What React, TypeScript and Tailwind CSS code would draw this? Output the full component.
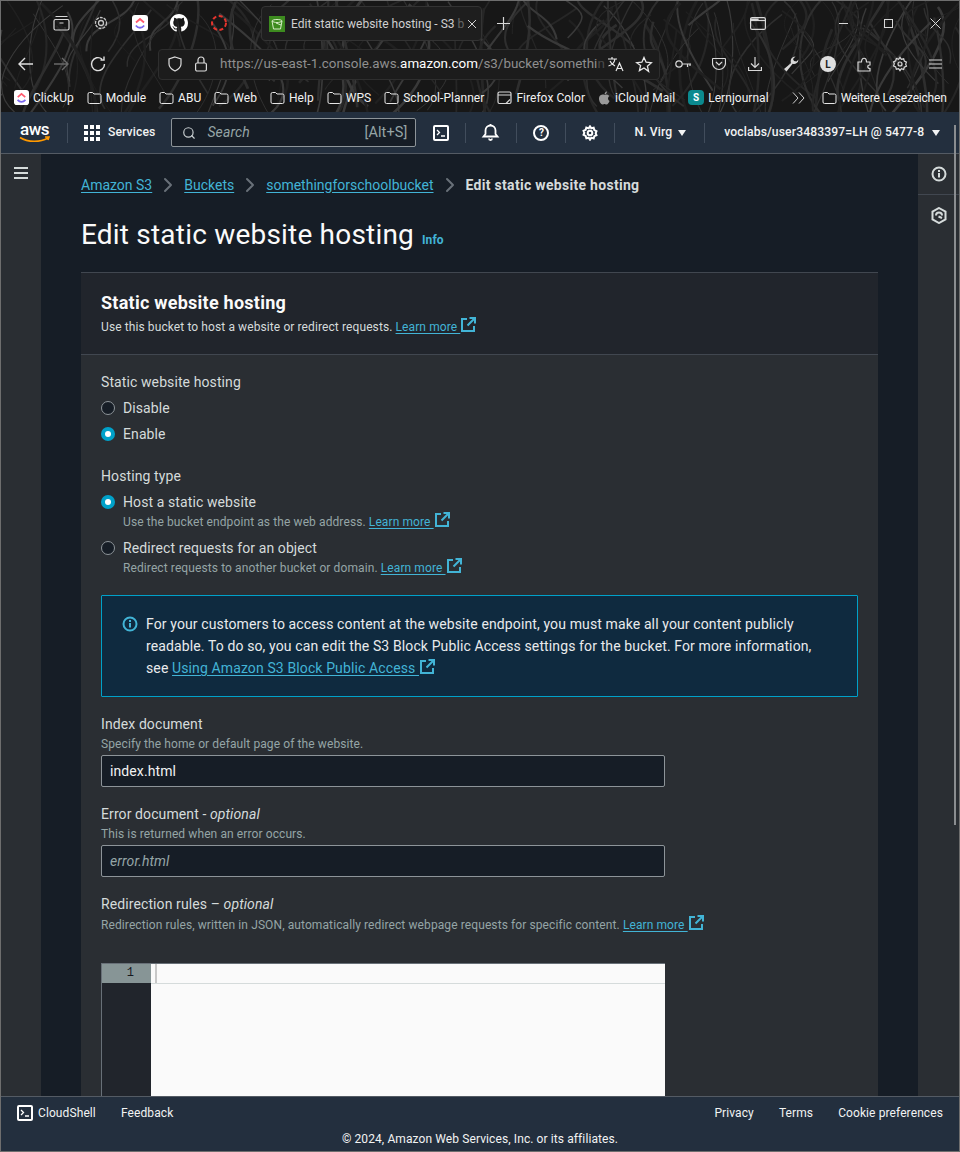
import { ChevronRight, Search } from "lucide-react";

const link = "text-[#42b4d6]";

function ExternalIcon() {
  return (
    <svg width="15" height="15" viewBox="0 0 15 15" fill="none" stroke="#42b4d6" strokeWidth="2" className="inline-block ml-[1px] align-[-1px]">
      <path d="M6 2H1v12h12V9" />
      <path d="M8.500 1H14v5.500M14 1L6.500 8.500" />
    </svg>
  );
}

function LearnMore() {
  return (
    <>
      <a className={`${link} underline underline-offset-2`}>Learn more&nbsp;</a>
      <ExternalIcon />
    </>
  );
}

function Radio({ on }: { on?: boolean }) {
  return on ? (
    <span className="w-[14px] h-[14px] rounded-full bg-[#00a1c9] flex items-center justify-center shrink-0">
      <span className="w-[6px] h-[6px] rounded-full bg-white" />
    </span>
  ) : (
    <span className="w-[14px] h-[14px] rounded-full bg-[#161d26] border border-[#8d9499] shrink-0" />
  );
}

function RadioRow({ on, label, hint }: { on?: boolean; label: string; hint?: React.ReactNode }) {
  return (
    <div className="flex gap-[8px]">
      <span className="h-[20px] flex items-center">
        <Radio on={on} />
      </span>
      <div>
        <div className="text-[14px] leading-[20px] text-[#d5dbdb]">{label}</div>
        {hint && <div className="text-[12px] leading-[16px] text-[#95a5a6]">{hint}</div>}
      </div>
    </div>
  );
}

function Divider() {
  return <span className="block w-px h-[20px] bg-[#414d5c]" />;
}

function Folder() {
  return (
    <svg width="15" height="14" viewBox="0 0 15 14" fill="none" stroke="#e6e6e6" strokeWidth="1" className="shrink-0">
      <path d="M1 3a1.500 1.500 0 0 1 1.500-1.500h3L7 3h5.500A1.500 1.500 0 0 1 14 4.500V11a1.500 1.500 0 0 1-1.500 1.500h-10A1.500 1.500 0 0 1 1 11z" />
    </svg>
  );
}

function ClickUpLogo({ size }: { size: number }) {
  return (
    <svg width={size} height={size} viewBox="0 0 16 16" className="shrink-0">
      <rect width="16" height="16" rx="3" fill="#fff" />
      <path d="M4 7.500L8 4l4 3.500" fill="none" stroke="#ff5a6e" strokeWidth="1.800" />
      <path d="M3.800 10.500c2.500 3 5.900 3 8.400 0" fill="none" stroke="#7b68ee" strokeWidth="1.800" />
    </svg>
  );
}

function Bookmark({ icon, label }: { icon: React.ReactNode; label: string }) {
  return (
    <div className="flex items-center gap-[4px] text-[12px] text-[#f2f2f2] whitespace-nowrap">
      {icon}
      <span>{label}</span>
    </div>
  );
}

// fibre texture behind the browser chrome
function Backdrop() {
  const strands: { d: string; c: string; w: number }[] = [];
  let seed = 7;
  const rnd = () => {
    seed = (seed * 16807) % 2147483647;
    return seed / 2147483647;
  };
  for (let i = 0; i < 190; i++) {
    const x = rnd() * 1000 - 20;
    const lean = (rnd() - 0.5) * 110;
    const bow = (rnd() - 0.5) * 90;
    const y0 = rnd() * 60 - 30;
    const y1 = y0 + 50 + rnd() * 90;
    strands.push({
      d: `M${x} ${y0}C${x + bow} ${y0 + 30} ${x + lean + bow} ${y1 - 30} ${x + lean} ${y1}`,
      c: ["#2e2e2e", "#262626", "#393939", "#202020"][i % 4],
      w: 0.7 + rnd() * 2.2,
    });
  }
  return (
    <svg className="absolute inset-0 w-full h-full" viewBox="0 0 960 112" preserveAspectRatio="none" fill="none">
      {strands.map((s, i) => (
        <path key={i} d={s.d} stroke={s.c} strokeWidth={s.w} />
      ))}
    </svg>
  );
}

function BrowserChrome() {
  return (
    <div className="relative h-[111px] bg-[#171717] overflow-hidden shrink-0 text-[#e6e6e6] tracking-normal">
      <Backdrop />
      {/* Tab strip */}
      <div className="relative h-[44px] flex items-center">
        <div className="w-[260px] flex items-center pl-[52px] gap-[22px]">
          <svg width="17" height="16" viewBox="0 0 17 16" fill="none" stroke="#d8d8d8" strokeWidth="1.200">
            <rect x="1" y="4.500" width="15" height="10.500" rx="1.500" />
            <path d="M2.500 1.500h12M6.500 8h4" />
          </svg>
          <svg width="18" height="18" viewBox="0 0 18 18" fill="none" stroke="#c8c8c8" strokeWidth="1.300">
            <circle cx="9" cy="9" r="5.500" strokeDasharray="3 1" />
            <circle cx="9" cy="9" r="2.500" />
          </svg>
          <ClickUpLogo size={16} />
          <svg width="18" height="18" viewBox="0 0 16 16" fill="#fff">
            <path d="M8 0C3.580 0 0 3.580 0 8c0 3.540 2.290 6.530 5.470 7.590.4.070.55-.17.55-.38 0-.19-.01-.82-.01-1.490-2.010.37-2.530-.49-2.690-.94-.09-.23-.48-.94-.82-1.130-.28-.15-.68-.52-.01-.53.63-.01 1.080.58 1.230.82.720 1.210 1.870.87 2.330.66.070-.52.280-.87.510-1.070-1.780-.2-3.640-.89-3.640-3.950 0-.87.310-1.590.820-2.150-.08-.2-.36-1.020.08-2.120 0 0 .67-.21 2.200.82.640-.18 1.320-.27 2-.27s1.360.09 2 .27c1.530-1.040 2.200-.82 2.200-.82.44 1.100.16 1.920.08 2.120.51.560.82 1.270.82 2.150 0 3.070-1.870 3.750-3.650 3.950.29.250.54.730.54 1.480 0 1.070-.01 1.930-.01 2.200 0 .21.150.46.550.38A8.010 8.010 0 0 0 16 8c0-4.420-3.580-8-8-8z" />
          </svg>
          <svg width="18" height="18" viewBox="0 0 18 18" fill="none" stroke="#e5342d" strokeWidth="2">
            <circle cx="9" cy="9" r="7" strokeDasharray="4 2.500" />
          </svg>
        </div>
        <div className="w-[221px] h-[35px] bg-[#1e1e1e] border border-[#333] rounded-[4px] flex items-center pl-[7px] pr-[9px] gap-[6px] mt-[1px]">
          <svg width="16" height="16" viewBox="0 0 16 16" className="shrink-0">
            <rect width="16" height="16" fill="#3d8b1f" />
            <path d="M3 5c0-2 10-2 10 0l-1.500 8h-7zM3 5c2 2 8 2 10 0M7 7l5 2" fill="none" stroke="#d8ecc8" strokeWidth="1" />
          </svg>
          <span className="text-[12px] text-[#d0d0d0] whitespace-nowrap w-[171px] shrink-0">
            Edit static website hosting - S3 <span className="opacity-40">b</span>
          </span>
          <svg width="10" height="10" viewBox="0 0 10 10" stroke="#d0d0d0" className="shrink-0 ml-[-1px]">
            <path d="M1 1l8 8M9 1l-8 8" />
          </svg>
        </div>
        <svg width="13" height="13" viewBox="0 0 13 13" stroke="#d8d8d8" className="ml-[15px]" strokeWidth="1.200">
          <path d="M6.500 0v13M0 6.500h13" />
        </svg>
        <div className="ml-auto flex items-center">
          <svg width="16" height="13" viewBox="0 0 16 13" fill="none" stroke="#d8d8d8" strokeWidth="1.200" className="mr-[73px]">
            <rect x=".6" y=".6" width="14.800" height="11.800" rx="1.500" />
            <path d="M1 3.500h7V2H1z" fill="#d8d8d8" />
            <path d="M1 3.500h14" />
          </svg>
          <span className="w-[9px] h-px bg-[#d8d8d8] mr-[36px]" />
          <span className="w-[9px] h-[9px] border border-[#d8d8d8] mr-[37px]" />
          <svg width="11" height="11" viewBox="0 0 11 11" stroke="#d8d8d8" className="mr-[18px]">
            <path d="M.5.500l10 10M10.500.500l-10 10" />
          </svg>
        </div>
      </div>
      {/* Toolbar */}
      <div className="relative h-[38px] flex items-center">
        <div className="w-[157px] flex items-center pl-[17px] shrink-0">
          <svg width="15" height="14" viewBox="0 0 15 14" fill="none" stroke="#e0e0e0" strokeWidth="1.400">
            <path d="M15 7H1M7 1L1 7l6 6" />
          </svg>
          <svg width="15" height="14" viewBox="0 0 15 14" fill="none" stroke="#6a6a6a" strokeWidth="1.400" className="ml-[21px]">
            <path d="M0 7h14M8 1l6 6-6 6" />
          </svg>
          <svg width="16" height="16" viewBox="0 0 16 16" fill="none" stroke="#e0e0e0" strokeWidth="1.400" className="ml-[21px]">
            <path d="M14.500 8A6.500 6.500 0 1 1 12 3M14 .5V4h-3.500" />
          </svg>
        </div>
        <div className="w-[502px] h-[31px] bg-[#1c1c1c] border border-[#2e2e2e] rounded-[4px] flex items-center pl-[8px] pr-[6px] shrink-0">
          <svg width="16" height="16" viewBox="0 0 16 16" fill="none" stroke="#dcdcdc" strokeWidth="1.200" className="shrink-0">
            <path d="M8 1l6 2v5c0 3.500-3 5.500-6 7-3-1.500-6-3.500-6-7V3z" />
          </svg>
          <svg width="14" height="16" viewBox="0 0 14 16" fill="none" stroke="#dcdcdc" strokeWidth="1.200" className="ml-[11px] shrink-0">
            <rect x="1.600" y="7" width="10.800" height="8" rx="1.500" />
            <path d="M4 7V4a3 3 0 0 1 6 0v3" />
          </svg>
          <div className="ml-[12px] text-[13.400px] text-[#8f8f8f] whitespace-nowrap w-[379px] shrink-0">
            https://us-east-1.console.aws.<span className="text-white">amazon.com</span>/s3/bucket/somethi<span className="opacity-40">n</span>
          </div>
          <svg width="18" height="16" viewBox="0 0 18 16" fill="none" stroke="#e8e8e8" strokeWidth="1.200" className="shrink-0 ml-[8px]">
            <path d="M1 3h9M5 1v2M8 3c-.5 3-3 6-6.500 7M3 5c1 2.500 3 4 5 5M9 15l3.500-8 3.500 8M10.300 12.500h4.500" />
          </svg>
          <svg width="18" height="17" viewBox="0 0 24 24" fill="none" stroke="#e8e8e8" strokeWidth="1.800" className="shrink-0 ml-[10px]">
            <path d="M12 2l3 6.800 7.400.7-5.600 4.900 1.700 7.300L12 17l-6.500 3.700 1.700-7.300L1.600 9.500 9 8.800z" />
          </svg>
        </div>
        <div className="flex items-center flex-1 pl-[15px] text-[#d8d8d8]">
          <svg width="16" height="10" viewBox="0 0 16 10" fill="none" stroke="#d8d8d8" strokeWidth="1.200" className="shrink-0">
            <circle cx="4" cy="5" r="3.200" />
            <path d="M7 5h9M12.500 5v3M15 5v2" />
          </svg>
          <svg width="14" height="14" viewBox="0 0 14 14" fill="none" stroke="#d8d8d8" strokeWidth="1.200" className="ml-[21px] shrink-0">
            <path d="M1 1.500h12c.5 0 .5.500.5 1v3.500A6.500 6.500 0 0 1 .5 6V2.500c0-.5 0-1 .5-1zM4 5l3 3 3-3" />
          </svg>
          <svg width="14" height="15" viewBox="0 0 14 15" fill="none" stroke="#d8d8d8" strokeWidth="1.200" className="ml-[22px] shrink-0">
            <path d="M7 0v10M3 6.500L7 10.500l4-4M.6 10v3.500h12.800V10" />
          </svg>
          <svg width="16" height="16" viewBox="0 0 16 16" fill="#d8d8d8" className="ml-[21px] shrink-0">
            <path d="M15.500 3.500a4.500 4.500 0 0 1-5.800 4.300L3.500 15.500l-2.500-2.500 7.200-6A4.500 4.500 0 0 1 12.500.500L10 3l1 2 2.500.5z" />
          </svg>
          <span className="ml-[21px] w-[16px] h-[16px] rounded-full bg-[#e0e0e0] text-[#222] text-[10px] font-bold flex items-center justify-center shrink-0">L</span>
          <svg width="15" height="15" viewBox="0 0 15 15" fill="none" stroke="#d8d8d8" strokeWidth="1.200" className="ml-[21px] shrink-0">
            <path d="M1 5h3.500c0-5 5-5 5 0H13v3c-3 0-3 3.500 0 3.500V14H1z" />
          </svg>
          <svg width="16" height="16" viewBox="0 0 24 24" fill="none" stroke="#d8d8d8" strokeWidth="1.800" className="ml-[20px] shrink-0">
            <circle cx="12" cy="12" r="3" />
            <path d="M12 2l2 3 3.500-.8 1 3.500 3.200 1.500-1.200 3 1.200 3-3.200 1.500-1 3.500L14 19l-2 3-2-3-3.500.8-1-3.500L2.300 14.800l1.200-3-1.200-3L5.500 7.300l1-3.500L10 5z" />
          </svg>
          <svg width="13" height="10" viewBox="0 0 13 10" stroke="#d8d8d8" strokeWidth="1.200" className="ml-[21px] shrink-0">
            <path d="M0 1h13M0 5h13M0 9h13" />
          </svg>
        </div>
      </div>
      {/* Bookmarks */}
      <div className="relative h-[29px] flex items-center pl-[13px] gap-[13px] tracking-[0.04px]">
        <Bookmark icon={<ClickUpLogo size={15} />} label="ClickUp" />
        <Bookmark icon={<Folder />} label="Module" />
        <Bookmark icon={<Folder />} label="ABU" />
        <Bookmark icon={<Folder />} label="Web" />
        <Bookmark icon={<Folder />} label="Help" />
        <Bookmark icon={<Folder />} label="WPS" />
        <Bookmark icon={<Folder />} label="School-Planner" />
        <Bookmark
          icon={
            <svg width="15" height="14" viewBox="0 0 15 14" fill="none" stroke="#d8d8d8" strokeWidth="1.200">
              <rect x="1" y="1" width="13" height="11.500" rx="1.500" />
              <path d="M1 4h13M9 12.500l4-4" />
            </svg>
          }
          label="Firefox Color"
        />
        <Bookmark
          icon={
            <svg width="13" height="14" viewBox="0 0 13 14" fill="#9a9a9a">
              <path d="M6.500 4C5 3 1.500 3.500 1 7c-.3 3 2 6.500 3.500 6.500 1 0 1.300-.5 2-.5s1 .5 2 .5c1.300 0 2.500-2 3-3.500-2-1-2-4 0-5-1.200-1.500-3.500-2-5-1zM6.500 3.500C6.500 2 7.500.5 9 .5c0 1.500-1 3-2.500 3z" />
            </svg>
          }
          label="iCloud Mail"
        />
        <Bookmark
          icon={<span className="w-[16px] h-[15px] rounded-[4px] bg-[#0b8a8f] text-white text-[10px] font-bold flex items-center justify-center">S</span>}
          label="Lernjournal"
        />
        <svg width="13" height="12" viewBox="0 0 13 12" fill="none" stroke="#d0d0d0" className="ml-[10px]">
          <path d="M1 .5L6 6l-5 5.500M7 .5L12 6l-5 5.500" />
        </svg>
        <div className="ml-[4px] tracking-[-0.2px]">
          <Bookmark icon={<Folder />} label="Weitere Lesezeichen" />
        </div>
      </div>
    </div>
  );
}

function TerminalBox() {
  return (
    <div className="w-[16px] h-[16px] border-2 border-white rounded-[2px] flex items-center justify-center shrink-0">
      <svg width="10" height="8" viewBox="0 0 10 8" fill="none" stroke="#fff" strokeWidth="1.300">
        <path d="M1 1l2.500 2.500L1 6M5 7h4" />
      </svg>
    </div>
  );
}

function AwsNav() {
  return (
    <div className="h-[42px] bg-[#232f3e] border-b border-[#545b64] flex items-center pl-[18px] text-[#f2f3f3] text-[12.200px] font-medium shrink-0">
      <div className="w-[31px] flex flex-col items-center leading-none">
        <span className="text-[17px] tracking-[-0.5px] leading-[13px] text-white">aws</span>
        <svg width="31" height="7" viewBox="0 0 31 7" fill="none" stroke="#ff9900" strokeWidth="1.600">
          <path d="M1 1.500c8 5 20 5 28 .5M26 1h4l-1 3" />
        </svg>
      </div>
      <span className="ml-[17px]">
        <Divider />
      </span>
      <div className="ml-[16px] grid grid-cols-3 gap-[2px]">
        {[...Array(9)].map((_, i) => (
          <span key={i} className="w-[4px] h-[4px] bg-white" />
        ))}
      </div>
      <span className="ml-[8px]">Services</span>
      <div className="ml-[16px] w-[245px] h-[29px] bg-[#161d26] border border-[#8d9499] rounded-[2px] flex items-center pl-[10px] pr-[8px]">
        <Search size={14} color="#c9cfd1" />
        <span className="ml-[11px] text-[14px] italic text-[#95a5a6] font-normal">Search</span>
        <span className="ml-auto text-[14.500px] text-[#95a5a6] font-normal">[Alt+S]</span>
      </div>
      <div className="ml-[17px]">
        <TerminalBox />
      </div>
      <span className="ml-[16px]">
        <Divider />
      </span>
      <svg width="19" height="17" viewBox="0 0 18 17" fill="none" stroke="#fff" strokeWidth="1.800" className="ml-[15px]">
        <path d="M2 12.500h14L14 10V6.500a5 5 0 0 0-10 0V10zM9 1.500V0M7.500 14.500c0 2 3 2 3 0" />
      </svg>
      <span className="ml-[16px]">
        <Divider />
      </span>
      <div className="ml-[16px] w-[16px] h-[16px] border-2 border-white rounded-full flex items-center justify-center text-[10px] font-bold text-white">?</div>
      <span className="ml-[16px]">
        <Divider />
      </span>
      <svg width="16" height="16" viewBox="0 0 24 24" fill="none" stroke="#fff" strokeWidth="3" className="ml-[16px]">
        <circle cx="12" cy="12" r="3.500" />
        <path d="M12 2l2 3 3.500-.8 1 3.500 3.200 1.500-1.200 3 1.200 3-3.200 1.500-1 3.500L14 19l-2 3-2-3-3.500.8-1-3.500L2.300 14.800l1.200-3-1.200-3L5.500 7.300l1-3.500L10 5z" />
      </svg>
      <span className="ml-[16px]">
        <Divider />
      </span>
      <span className="ml-[19px]">N. Virg</span>
      <span className="ml-[6px] w-0 h-0 border-x-[4.500px] border-x-transparent border-t-[6px] border-t-[#f2f3f3]" />
      <span className="ml-[18px]">
        <Divider />
      </span>
      <span className="ml-[19px] whitespace-nowrap">voclabs/user3483397=LH @ 5477-8</span>
      <span className="ml-[8px] w-0 h-0 border-x-[4.500px] border-x-transparent border-t-[6px] border-t-[#f2f3f3]" />
    </div>
  );
}

function Crumb({ children }: { children: React.ReactNode }) {
  return <a className={`${link} underline underline-offset-2 text-[14px] tracking-normal`}>{children}</a>;
}

function Sep() {
  return <ChevronRight size={24} color="#687078" strokeWidth={2} className="mx-[4px]" />;
}

function Field({ label, optional, sep, hint, tight }: { label: string; optional?: boolean; sep?: string; hint: React.ReactNode; tight?: boolean }) {
  return (
    <>
      <div className="text-[14px] leading-[20px] text-[#d5dbdb]">
        {label}
        {optional && (
          <>
            {" "}
            {sep} <i>optional</i>
          </>
        )}
      </div>
      <div className={`text-[12px] leading-[16px] text-[#95a5a6] ${tight ? "mt-[1px]" : "mt-[2px]"}`}>{hint}</div>
    </>
  );
}

function Card() {
  return (
    <div className="bg-[#2a2e33] border-t border-[#414750] mt-[18px] flex-1 min-h-0 overflow-hidden">
      <div className="h-[82px] bg-[#21252c] border-b border-[#414750] px-[20px] pt-[18px]">
        <div className="text-[18px] leading-[24px] font-bold text-[#fafafa] tracking-[0.25px]">Static website hosting</div>
        <div className="text-[12px] leading-[16px] mt-[2px] text-[#d5dbdb]">
          Use this bucket to host a website or redirect requests. <LearnMore />
        </div>
      </div>
      <div className="px-[20px] pt-[17px]">
        <div className="text-[14px] leading-[20px] text-[#d5dbdb]">Static website hosting</div>
        <div className="mt-[6px] flex flex-col gap-[6px]">
          <RadioRow label="Disable" />
          <RadioRow on label="Enable" />
        </div>
        <div className="mt-[22px] text-[14px] leading-[20px] text-[#d5dbdb]">Hosting type</div>
        <div className="mt-[6px] flex flex-col gap-[8px]">
          <RadioRow
            on
            label="Host a static website"
            hint={
              <>
                Use the bucket endpoint as the web address. <LearnMore />
              </>
            }
          />
          <RadioRow
            label="Redirect requests for an object"
            hint={
              <>
                Redirect requests to another bucket or domain. <LearnMore />
              </>
            }
          />
        </div>
        <div className="mt-[19px] h-[102px] bg-[#0f2a3f] border border-[#00a1c9] rounded-[1px] pl-[20px] pr-[30px] pt-[17px] flex gap-[8px]">
          <svg width="16" height="16" viewBox="0 0 16 16" fill="none" stroke="#42b4d6" strokeWidth="2" className="shrink-0 mt-[3px]">
            <circle cx="8" cy="8" r="6.500" />
            <path d="M8 7v4.500M8 4v2" />
          </svg>
          <p className="text-[14px] leading-[22px] text-[#e9ebed] tracking-[0.12px]">
            For your customers to access content at the website endpoint, you must make all your content publicly readable. To do so, you can edit the S3 Block Public Access settings for the bucket. For more information, see{" "}
            <a className={`${link} underline underline-offset-2`}>Using Amazon S3 Block Public Access&nbsp;</a>
            <ExternalIcon />
          </p>
        </div>
        <div className="mt-[17px]">
          <Field label="Index document" hint="Specify the home or default page of the website." />
          <div className="mt-[3px] w-[564px] h-[32px] bg-[#161d26] border border-[#8d9499] rounded-[2px] flex items-center px-[8px] text-[14px] text-[#f2f3f3]">index.html</div>
        </div>
        <div className="mt-[17px]">
          <Field label="Error document" optional sep="-" hint="This is returned when an error occurs." />
          <div className="mt-[3px] w-[564px] h-[32px] bg-[#161d26] border border-[#8d9499] rounded-[2px] flex items-center px-[8px] text-[14px] italic text-[#95a5a6]">error.html</div>
        </div>
        <div className="mt-[17px]">
          <Field
            label="Redirection rules"
            optional
            sep="–"
            tight
            hint={
              <>
                Redirection rules, written in JSON, automatically redirect webpage requests for specific content. <LearnMore />
              </>
            }
          />
          <div className="mt-[30px] w-[564px] h-[140px] border-t border-l border-[#687078] flex">
            <div className="w-[49px] shrink-0 bg-[#21252c]">
              <div className="h-[19px] bg-[#879596] text-right pr-[17px] text-[12px] leading-[19px] text-[#16191f] font-['Liberation_Mono',monospace]">1</div>
            </div>
            <div className="flex-1 bg-[#fafafa]">
              <div className="h-[20px] border-b border-[#d5dbdb] pl-[4px]">
                <span className="block w-[2px] h-[19px] bg-[#c8c8c8]" />
              </div>
            </div>
          </div>
        </div>
      </div>
    </div>
  );
}

function Footer() {
  return (
    <div className="h-[55px] bg-[#232f3e] border-t border-[#545b64] shrink-0 text-[12px] text-[#f2f3f3] relative">
      <div className="h-[32px] flex items-center px-[16px]">
        <TerminalBox />
        <span className="ml-[5px]">CloudShell</span>
        <span className="ml-[25px]">Feedback</span>
        <span className="ml-auto">Privacy</span>
        <span className="ml-[25px]">Terms</span>
        <span className="ml-[25px]">Cookie preferences</span>
      </div>
      <div className="text-center leading-[16px] mt-[2px]">© 2024, Amazon Web Services, Inc. or its affiliates.</div>
    </div>
  );
}

export default function App() {
  return (
    <div className="relative w-[960px] h-[1152px] flex flex-col overflow-hidden border border-[#6e6e6e] tracking-[0.1px] font-['Roboto','Noto_Sans',sans-serif]">
      <BrowserChrome />
      <AwsNav />
      <div className="flex flex-1 min-h-0">
        <div className="w-[40px] shrink-0 bg-[#2a2e33] pt-[13px] flex justify-center items-start">
          <svg width="14" height="12" viewBox="0 0 14 12" stroke="#d5dbdb" strokeWidth="2">
            <path d="M0 1h14M0 6h14M0 11h14" />
          </svg>
        </div>
        <div className="flex-1 min-w-0 bg-[#161d26] px-[40px] flex flex-col">
          <div className="h-[62px] flex items-center whitespace-nowrap">
            <Crumb>Amazon S3</Crumb>
            <Sep />
            <Crumb>Buckets</Crumb>
            <Sep />
            <Crumb>somethingforschoolbucket</Crumb>
            <Sep />
            <span className="text-[14px] font-bold text-[#d5dbdb] tracking-[0.3px]">Edit static website hosting</span>
          </div>
          <div className="flex items-baseline gap-[8px] h-[38px] pt-[2px]">
            <h1 className="text-[28px] leading-[34px] text-[#fafafa] tracking-[0.2px]">Edit static website hosting</h1>
            <span className={`${link} text-[12px] font-bold`}>Info</span>
          </div>
          <Card />
        </div>
        <div className="w-[41px] shrink-0 bg-[#2a2e33] flex flex-col items-center">
          <div className="h-[41px] w-full border-b border-[#414750] flex items-center justify-center">
            <svg width="16" height="16" viewBox="0 0 16 16" fill="none" stroke="#d5dbdb" strokeWidth="2">
              <circle cx="8" cy="8" r="6.500" />
              <path d="M8 7v4.500M8 4v2" />
            </svg>
          </div>
          <div className="h-[41px] flex items-center justify-center">
            <svg width="16" height="17" viewBox="0 0 16 17" fill="none" stroke="#d5dbdb" strokeWidth="2">
              <path d="M8 1l6.500 3.700v7.600L8 16l-6.500-3.700V4.700z" />
              <path d="M11 11L7.500 9.500M5 8.500a3 3 0 0 1 6 0" />
            </svg>
          </div>
        </div>
      </div>
      <Footer />
      {/* page scrollbar thumb, sits over the right rail */}
      <span className="absolute right-[3px] top-[124px] w-[2px] h-[700px] bg-[#8a8d90]" />
    </div>
  );
}
